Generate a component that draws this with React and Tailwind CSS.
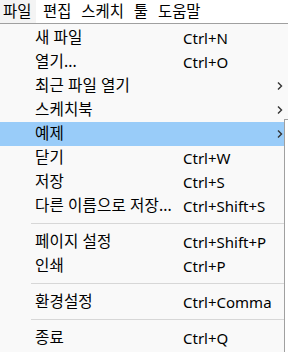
import React from 'react';

const font = { fontFamily: '"Noto Sans", "Noto Sans CJK KR", sans-serif' };

const menuBar = ['편집', '스케치', '툴', '도움말'];

const items = [
  { label: '새 파일', key: 'Ctrl+N' },
  { label: '열기...', key: 'Ctrl+O' },
  { label: '최근 파일 열기', sub: true },
  { label: '스케치북', sub: true },
  { label: '예제', sub: true, active: true },
  { label: '닫기', key: 'Ctrl+W' },
  { label: '저장', key: 'Ctrl+S' },
  { label: '다른 이름으로 저장...', key: 'Ctrl+Shift+S' },
  { sep: true },
  { label: '페이지 설정', key: 'Ctrl+Shift+P' },
  { label: '인쇄', key: 'Ctrl+P' },
  { sep: true },
  { label: '환경설정', key: 'Ctrl+Comma' },
  { sep: true },
  { label: '종료', key: 'Ctrl+Q' },
];

function Chevron() {
  return (
    <svg width="6" height="10" viewBox="0 0 6 10" className="shrink-0">
      <path d="M1 1.5 L4.5 5 L1 8.5" fill="none" stroke="#333" strokeWidth="1.4" />
    </svg>
  );
}

function Row({ item }) {
  if (item.sep) {
    return (
      <div className="h-[12px] pt-[5px] pl-[31px]">
        <div className="h-px bg-[#d7d7d7]" />
      </div>
    );
  }
  return (
    <div
      className={`flex h-[24px] items-center pl-[35px] pr-[5px] ${
        item.active ? 'bg-[#99ccf9]' : ''
      }`}
    >
      <span className="w-[148px] whitespace-nowrap text-[15.6px] tracking-[0.1px]">{item.label}</span>
      <span className="flex-1 whitespace-nowrap">{item.key}</span>
      {item.sub && <Chevron />}
    </div>
  );
}

export default function App() {
  return (
    <div
      className="relative h-[352px] w-[288px] overflow-hidden bg-white text-[15px] leading-none text-black"
      style={font}
    >
      <div className="flex h-[23px] items-center text-[15.4px]">
        <div className="flex h-full w-[36px] items-center bg-[#f4f4f4] pl-[3px]">파일</div>
        <div className="flex items-center gap-[10px] pl-[7px]">
          {menuBar.map((m) => (
            <span key={m}>{m}</span>
          ))}
        </div>
      </div>
      <div className="border-t border-[#a0a0a0] bg-[#f9f9f9] pt-[2px] pb-[4px]">
        {items.map((item, i) => (
          <Row key={i} item={item} />
        ))}
      </div>
      <div className="absolute top-[119px] bottom-0 left-[284px] w-[20px] border-t border-l border-[#a0a0a0] bg-white" />
    </div>
  );
}
